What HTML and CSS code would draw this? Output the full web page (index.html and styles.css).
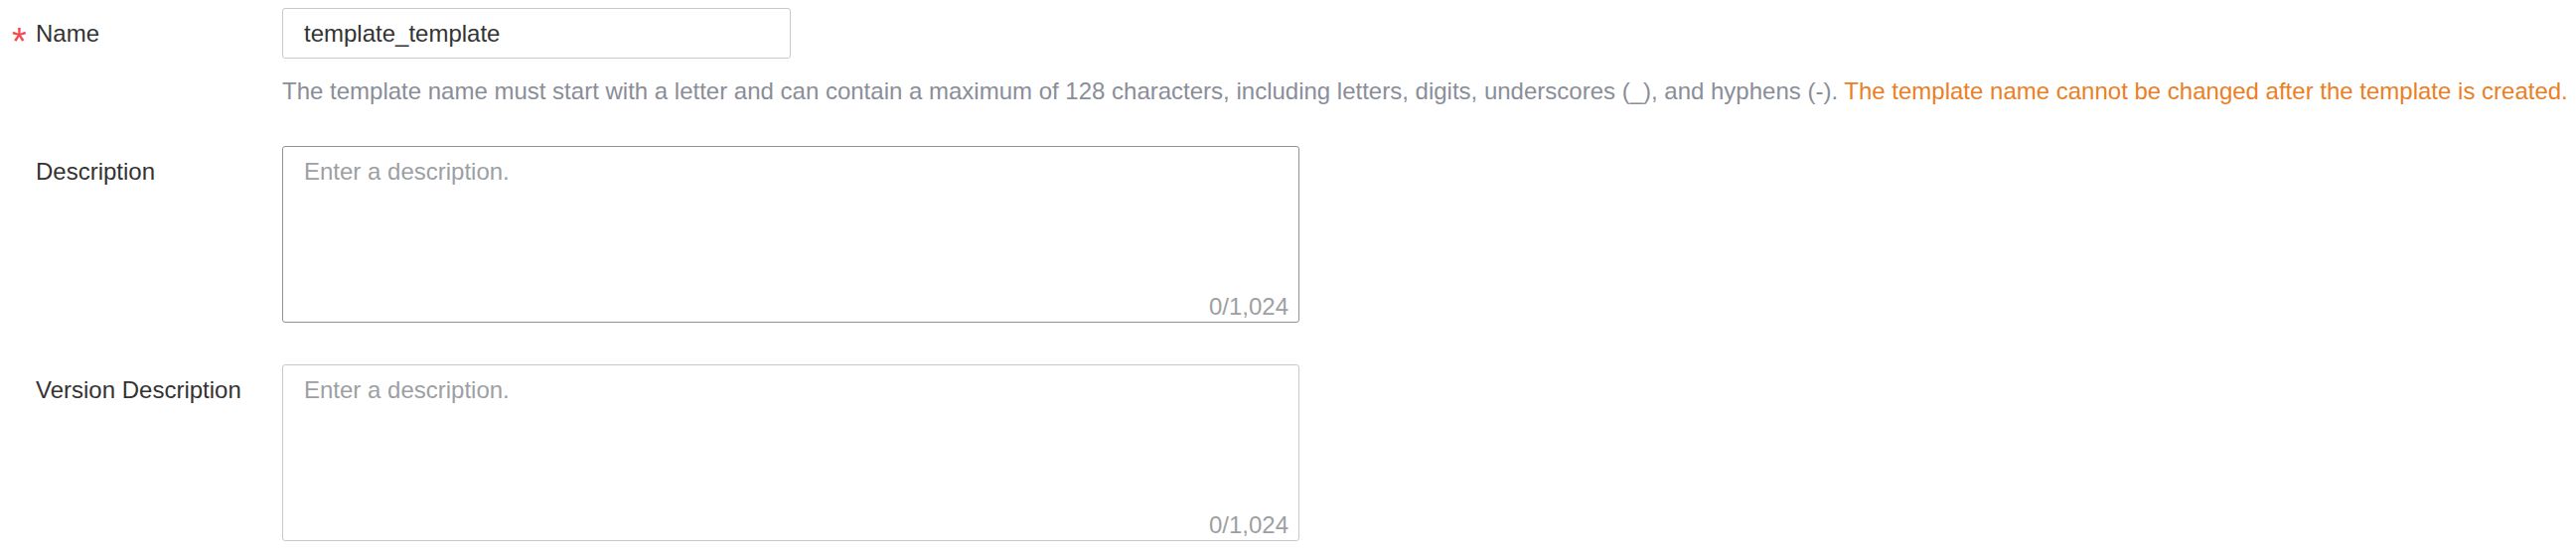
FILE: index.html
```html
<!DOCTYPE html>
<html lang="en">
<head>
<meta charset="utf-8">
<title>Template form</title>
<link rel="stylesheet" href="styles.css">
</head>
<body>
<form class="form">
  <div class="row">
    <label class="label"><span class="star">*</span><span class="label-text">Name</span></label>
    <div class="control">
      <input class="input" type="text" value="template_template">
      <p class="help">The template name must start with a letter and can contain a maximum of 128 characters, including letters, digits, underscores (_), and hyphens (-). <span class="warn">The template name cannot be changed after the template is created.</span></p>
    </div>
  </div>
  <div class="row row-desc">
    <label class="label"><span class="label-text">Description</span></label>
    <div class="control">
      <div class="area-wrap">
        <textarea class="area area-active" placeholder="Enter a description."></textarea>
        <span class="count">0/1,024</span>
      </div>
    </div>
  </div>
  <div class="row row-ver">
    <label class="label"><span class="label-text">Version Description</span></label>
    <div class="control">
      <div class="area-wrap">
        <textarea class="area" placeholder="Enter a description."></textarea>
        <span class="count">0/1,024</span>
      </div>
    </div>
  </div>
</form>
</body>
</html>
```
FILE: styles.css
```css
* { box-sizing: border-box; }
html, body { margin: 0; padding: 0; background: #ffffff; }
body {
  font-family: "Liberation Sans", Arial, sans-serif;
  color: #333333;
  width: 2593px;
  height: 561px;
  overflow: hidden;
}
.form {
  padding: 8px 0 0 12px;
}
.row {
  display: flex;
  align-items: flex-start;
}
.row-desc { margin-top: 37px; }
.row-ver { margin-top: 42px; }
.label {
  width: 272px;
  flex: none;
  display: flex;
  align-items: center;
  height: 51px;
  font-size: 24px;
  color: #333333;
}
.star {
  width: 24px;
  flex: none;
  color: #f5484d;
  font-size: 38px;
  line-height: 38px;
  padding-top: 17px;
}
.row-desc .label-text,
.row-ver .label-text { padding-left: 24px; }
.control {
  flex: none;
}
.input {
  display: block;
  width: 512px;
  height: 51px;
  border: 1.5px solid #c7c9cf;
  border-radius: 3px;
  padding: 0 21px;
  font-family: inherit;
  font-size: 24px;
  color: #333333;
  outline: none;
  background: #fff;
}
.help {
  margin: 15px 0 0 0;
  font-size: 24px;
  line-height: 36px;
  color: #8a8e99;
  white-space: nowrap;
}
.warn { color: #ea7f26; }
.area-wrap {
  position: relative;
  width: 1024px;
  height: 178px;
}
.area {
  display: block;
  width: 100%;
  height: 100%;
  border: 1.5px solid #c7c9cf;
  border-radius: 3px;
  padding: 7px 21px;
  font-family: inherit;
  font-size: 24px;
  line-height: 36px;
  color: #333333;
  resize: none;
  outline: none;
  background: #fff;
}
.area-active { border-color: #8f9196; }
.area::placeholder { color: #9d9fa4; opacity: 1; }
.count {
  position: absolute;
  right: 11px;
  bottom: 1px;
  font-size: 24px;
  line-height: 30px;
  color: #9d9fa4;
}
```
